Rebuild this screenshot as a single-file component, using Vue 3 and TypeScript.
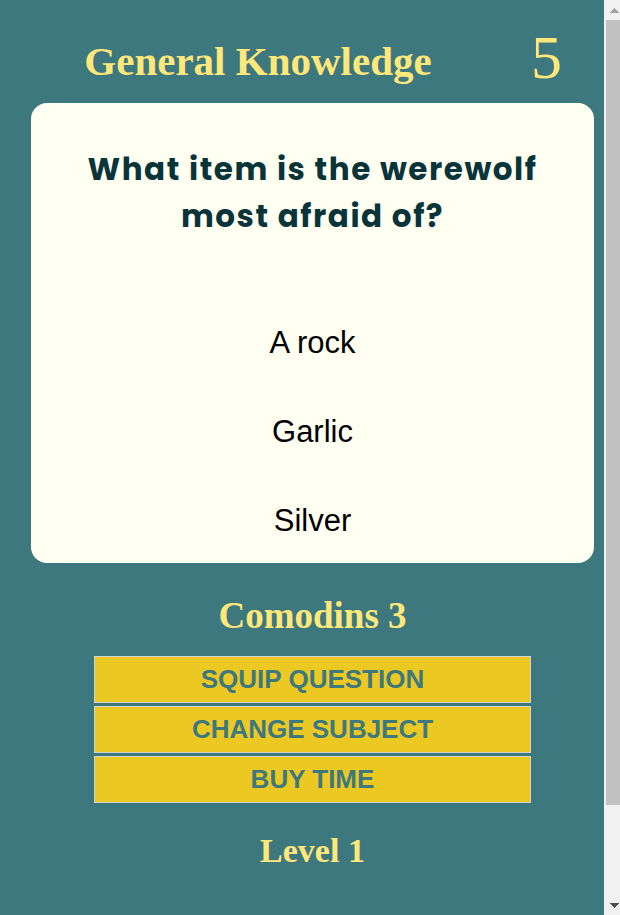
<script setup lang="ts">
import { ref } from 'vue'

const subject = ref<string>('General Knowledge')
const seconds = ref<number>(5)
const jokers = ref<number>(3)
const level = ref<number>(1)
const question = ref<string>('What item is the werewolf most afraid of?')
const answers: string[] = ['A rock', 'Garlic', 'Silver']
const actions: string[] = ['Squip question', 'Change subject', 'Buy time']
</script>

<template>
  <div class="window">
    <main class="game">
      <header class="top">
        <h1 class="subject">{{ subject }}</h1>
        <span class="timer">{{ seconds }}</span>
      </header>
      <section class="card">
        <h2 class="question">{{ question }}</h2>
        <div class="answers">
          <button v-for="answer in answers" :key="answer" type="button" class="answer">{{ answer }}</button>
        </div>
      </section>
      <h2 class="jokers">Comodins {{ jokers }}</h2>
      <div class="actions">
        <button v-for="action in actions" :key="action" type="button" class="action">{{ action }}</button>
      </div>
      <h2 class="level">Level {{ level }}</h2>
    </main>
    <div class="scrollbar" aria-hidden="true">
      <svg class="arrow" viewBox="0 0 14 20" shape-rendering="crispEdges">
        <path d="M8 8h1v1h1v1h1v1h1v1h1v1H4v-1h1v-1h1v-1h1V9h1z" fill="#a3a3a3" />
      </svg>
      <div class="track"><div class="thumb"></div></div>
      <svg class="arrow" viewBox="0 0 14 20" shape-rendering="crispEdges">
        <path d="M4 8h9v1h-1v1h-1v1h-1v1H9v1H8v-1H7v-1H6v-1H5V9H4z" fill="#505050" />
      </svg>
    </div>
  </div>
</template>

<style>
body {
  margin: 0;
  background: #3e787f;
}
</style>

<style scoped>
.window {
  display: flex;
  min-height: 100vh;
  background: #3e787f;
  font-family: "Liberation Serif", "Times New Roman", serif;
  color: #ffe77a;
}

.game {
  flex: 1;
  min-width: 0;
  padding: 21px 10px 0 31px;
  text-align: center;
}

h1,
h2 {
  margin: 0;
}

.top {
  display: flex;
  align-items: flex-start;
  height: 82px;
}

.subject {
  flex: 1;
  padding-top: 16px;
  font-size: 41px;
  line-height: 48px;
}

.timer {
  padding: 0 32px 0 46px;
  font-size: 62px;
  line-height: 72px;
}

.card {
  box-sizing: border-box;
  min-height: 460px;
  padding: 43px 40px 0;
  border-radius: 16px;
  background: #fffff2;
}

.question {
  color: #09343a;
  font-family: Poppins, Inter, sans-serif;
  font-size: 31px;
  font-weight: 700;
  line-height: 47px;
  letter-spacing: 0.05em;
}

.answers {
  display: flex;
  flex-direction: column;
  align-items: center;
  gap: 4px;
  padding-top: 60px;
}

.answer {
  height: 85px;
  padding: 0 24px;
  border: 0;
  background: transparent;
  color: #000;
  font-family: "Liberation Sans", Arial, sans-serif;
  font-size: 31px;
  line-height: 36px;
}

.jokers {
  padding: 32px 0 19px;
  font-size: 37px;
  line-height: 42px;
}

.actions {
  display: flex;
  flex-direction: column;
  gap: 3px;
  padding: 0 63px;
}

.action {
  height: 47px;
  padding: 0;
  border: 1px solid #d3d3d3;
  background: #ecc922;
  color: #3e787f;
  font-family: "Liberation Sans", Arial, sans-serif;
  font-size: 26px;
  font-weight: 700;
  text-transform: uppercase;
}

.level {
  padding-top: 28px;
  font-size: 34px;
  line-height: 40px;
}

.scrollbar {
  display: flex;
  flex-direction: column;
  width: 14px;
  padding-left: 2px;
  background: #f1f1f1;
}

.arrow {
  display: block;
  width: 14px;
  height: 20px;
}

.track {
  flex: 1;
}

.thumb {
  height: 785px;
  background: #c1c1c1;
}
</style>
